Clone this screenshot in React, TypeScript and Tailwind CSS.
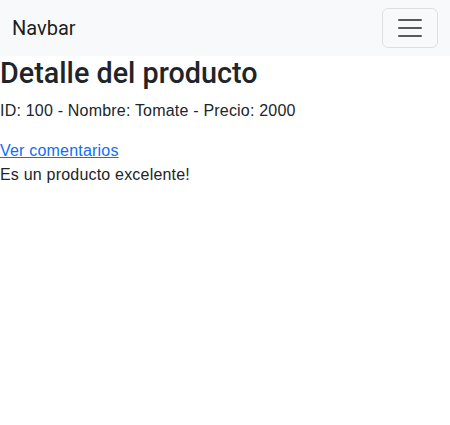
export default function App() {
  return (
    <div className="min-h-[425px] bg-white text-[#212529] font-['Liberation_Sans',Arial,sans-serif] text-base leading-6 tracking-[0.2px]">
      <nav className="bg-[#f8f9fa] py-2">
        <div className="flex items-center justify-between px-3">
          <a href="#" className="font-['Roboto',Arial,sans-serif] tracking-normal text-[20px] leading-[30px] py-[5px] text-black/90">
            Navbar
          </a>
          <button
            type="button"
            aria-label="Toggle navigation"
            className="flex h-10 w-14 items-center justify-center rounded-md border border-black/10"
          >
            <svg width="30" height="30" viewBox="0 0 30 30" fill="none">
              <path
                d="M4 7h22M4 15h22M4 23h22"
                stroke="rgba(33,37,41,0.75)"
                strokeWidth="2"
                strokeLinecap="round"
                strokeMiterlimit="10"
              />
            </svg>
          </button>
        </div>
      </nav>
      <h1 className="mb-2 font-['Roboto',Arial,sans-serif] tracking-normal text-[28.75px] font-medium leading-[1.2]">
        Detalle del producto
      </h1>
      <p className="mb-4">ID: 100 - Nombre: Tomate - Precio: 2000</p>
      <a href="#" className="text-[#0d6efd] underline">
        Ver comentarios
      </a>
      <div>Es un producto excelente!</div>
    </div>
  );
}
